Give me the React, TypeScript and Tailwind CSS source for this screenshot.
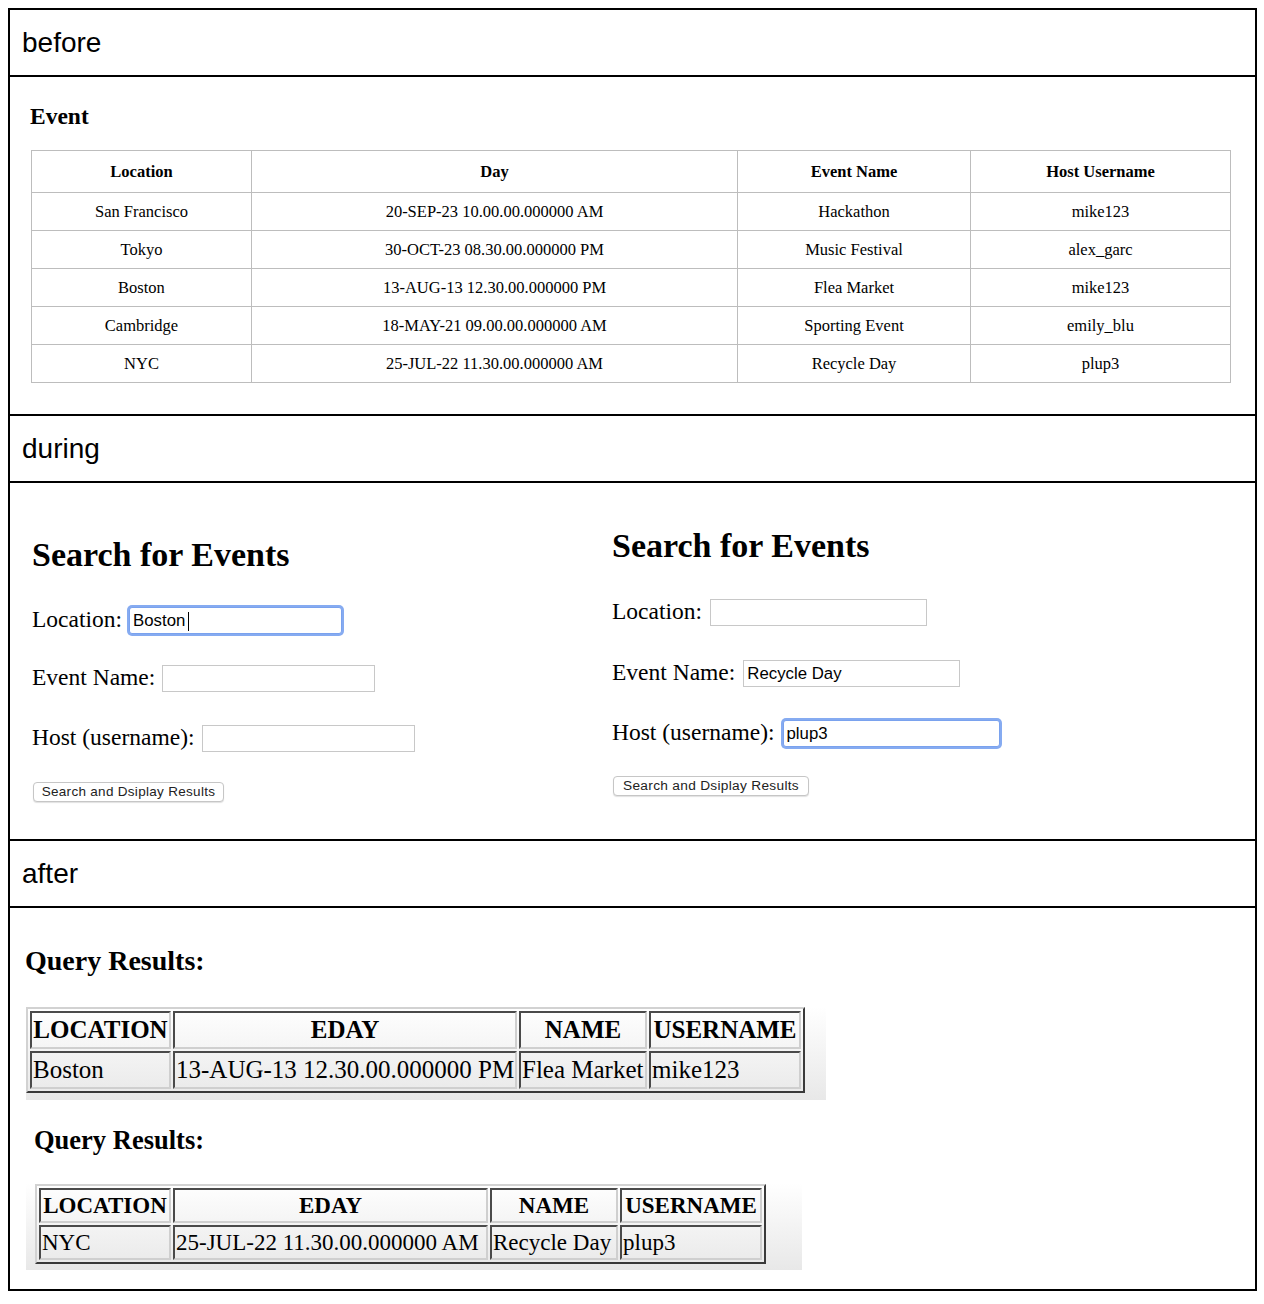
import React from 'react';

type Row = [string, string, string, string];

const events: Row[] = [
  ['San Francisco', '20-SEP-23 10.00.00.000000 AM', 'Hackathon', 'mike123'],
  ['Tokyo', '30-OCT-23 08.30.00.000000 PM', 'Music Festival', 'alex_garc'],
  ['Boston', '13-AUG-13 12.30.00.000000 PM', 'Flea Market', 'mike123'],
  ['Cambridge', '18-MAY-21 09.00.00.000000 AM', 'Sporting Event', 'emily_blu'],
  ['NYC', '25-JUL-22 11.30.00.000000 AM', 'Recycle Day', 'plup3'],
];

const StageLabel = ({ children }: { children: string }) => (
  <div className="flex h-[67px] items-center border-b-2 border-black pl-3 font-['Liberation_Sans',Arial,sans-serif] text-[28px] leading-none">
    {children}
  </div>
);

interface FieldProps {
  label: string;
  value?: string;
  focused?: boolean;
  caret?: boolean;
  widthClass: string;
  rowClass: string;
}

const Field = ({ label, value = '', focused, caret, widthClass, rowClass }: FieldProps) => (
  <div className={`flex items-end ${rowClass}`}>
    <label className="mb-px text-[23.5px] leading-[27px]">{label}</label>
    <div className="relative">
      <input
        readOnly
        value={value}
        className={`${widthClass} h-[27px] border bg-white px-[3px] font-['Liberation_Sans',Arial,sans-serif] text-[16.8px] text-black outline-none ${
          focused
            ? 'rounded-[3px] border-[#7aa2ee] shadow-[0_0_0_2px_#86abf1]'
            : 'border-[#c8c8c8]'
        }`}
      />
      {/* text cursor */}
      {caret && <span className="absolute left-[59px] top-[5px] h-[19px] w-px bg-black" />}
    </div>
  </div>
);

const SearchButton = ({ className }: { className: string }) => (
  <button
    type="button"
    className={`ml-px flex h-[20px] items-center justify-center rounded-[4px] border border-[#c6c6c6] bg-white font-['Liberation_Sans',Arial,sans-serif] tracking-[0.3px] text-[#222] shadow-[0_1px_1px_rgba(0,0,0,0.12)] ${className}`}
  >
    Search and Dsiplay Results
  </button>
);

interface ResultTableProps {
  row: Row;
  tableClass: string;
  textClass: string;
  widths: [string, string, string, string];
}

const ResultTable = ({ row, tableClass, textClass, widths }: ResultTableProps) => {
  const cell =
    'border-2 border-t-[#4a4a4a] border-l-[#4a4a4a] border-r-[#cfcfcf] border-b-[#cfcfcf] p-px';
  return (
    <table
      className={`table-fixed border-separate border-spacing-[2px] border-2 border-t-[#d2d2d2] border-l-[#d2d2d2] border-r-[#3a3a3a] border-b-[#3a3a3a] ${tableClass} ${textClass}`}
    >
      <thead>
        <tr>
          {['LOCATION', 'EDAY', 'NAME', 'USERNAME'].map((h, i) => (
            <th key={h} className={`${cell} ${widths[i]} text-center font-bold`}>
              {h}
            </th>
          ))}
        </tr>
      </thead>
      <tbody>
        <tr>
          {row.map((v, i) => (
            <td key={i} className={`${cell} whitespace-nowrap text-left`}>
              {v}
            </td>
          ))}
        </tr>
      </tbody>
    </table>
  );
};

export default function App() {
  return (
    <div className="ml-2 mt-2 w-[1249px] border-2 border-black bg-white font-['Liberation_Serif',serif] text-black">
      <StageLabel>before</StageLabel>

      {/* Events table */}
      <section className="h-[339px] border-b-2 border-black pl-5 pt-[25px]">
        <h2 className="text-[23.5px] font-bold leading-[28px]">Event</h2>
        <table className="ml-px mt-5 w-[1199px] table-fixed border-collapse border border-[#bdbdbd] text-center text-[16.5px] leading-[19px]">
          <colgroup>
            <col className="w-[220px]" />
            <col className="w-[486px]" />
            <col className="w-[233px]" />
            <col className="w-[260px]" />
          </colgroup>
          <thead>
            <tr>
              {['Location', 'Day', 'Event Name', 'Host Username'].map((h) => (
                <th key={h} className="border border-[#bdbdbd] py-[11px] font-bold">
                  {h}
                </th>
              ))}
            </tr>
          </thead>
          <tbody>
            {events.map((r) => (
              <tr key={r[1]}>
                {r.map((v, i) => (
                  <td key={i} className="border border-[#bdbdbd] py-[9px]">
                    {v}
                  </td>
                ))}
              </tr>
            ))}
          </tbody>
        </table>
      </section>

      <StageLabel>during</StageLabel>

      {/* Search forms */}
      <section className="flex h-[358px] border-b-2 border-black">
        <div className="w-[580px] pl-[22px] pt-[52px]">
          <h2 className="text-[34px] font-bold leading-[40px]">Search for Events</h2>
          <Field label="Location:" value="Boston" focused caret widthClass="w-[213px]" rowClass="mt-[31px] gap-[7px]" />
          <Field label="Event Name:" widthClass="w-[213px]" rowClass="mt-[30px] gap-[7px]" />
          <Field label="Host (username):" widthClass="w-[213px]" rowClass="mt-[32px] gap-[7px]" />
          <SearchButton className="mt-[30px] w-[191px] text-[13.5px]" />
        </div>
        <div className="pl-[22px] pt-[43px]">
          <h2 className="text-[34px] font-bold leading-[40px]">Search for Events</h2>
          <Field label="Location:" widthClass="w-[217px]" rowClass="mt-[32px] gap-[8px]" />
          <Field label="Event Name:" value="Recycle Day" widthClass="w-[217px]" rowClass="mt-[33px] gap-[8px]" />
          <Field label="Host (username):" value="plup3" focused widthClass="w-[217px]" rowClass="mt-[32px] gap-[8px]" />
          <SearchButton className="mt-[29px] w-[196px] text-[13.7px]" />
        </div>
      </section>

      <StageLabel>after</StageLabel>

      {/* Query results */}
      <section className="h-[381px] pt-[37px]">
        <h3 className="ml-[15px] text-[28px] font-bold leading-[32px]">Query Results:</h3>
        <div className="ml-[16px] mt-[30px] w-[800px] bg-linear-to-b from-white to-[#e8e8e8] pb-[7px]">
          <ResultTable
            row={events[2]}
            tableClass="w-[779px]"
            textClass="text-[25px] leading-[32px]"
            widths={['w-[141px]', 'w-[344px]', 'w-[128px]', 'w-[152px]']}
          />
        </div>

        <h3 className="ml-[24px] mt-[25px] text-[26.5px] font-bold leading-[30px]">Query Results:</h3>
        <div className="ml-[16px] mt-[28px] w-[776px] bg-linear-to-b from-white to-[#e8e8e8] pb-[6px] pl-[9px] pt-px">
          <ResultTable
            row={events[4]}
            tableClass="w-[731px]"
            textClass="text-[23px] leading-[29px]"
            widths={['w-[132px]', 'w-[315px]', 'w-[128px]', 'w-[142px]']}
          />
        </div>
      </section>
    </div>
  );
}
